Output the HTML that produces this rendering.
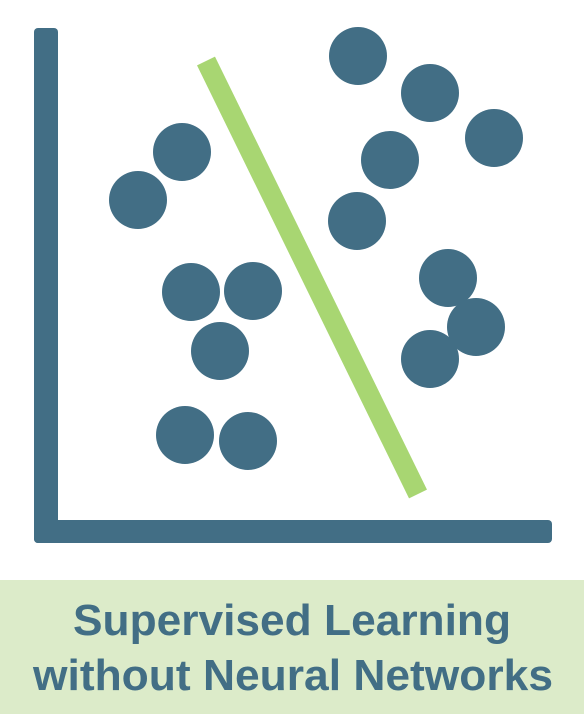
<!DOCTYPE html>
<html><head><meta charset="utf-8"><style>
html,body{margin:0;padding:0;background:#fff;}
svg{display:block}
</style></head><body>
<svg width="584" height="714" viewBox="0 0 584 714" xmlns="http://www.w3.org/2000/svg">
<rect x="0" y="0" width="584" height="714" fill="#fff"/>
<g fill="#426e85">
<rect x="34" y="28" width="24" height="515" rx="4"/>
<rect x="34" y="520" width="518" height="23" rx="4"/>
<circle cx="358" cy="56" r="29"/>
<circle cx="430" cy="93" r="29"/>
<circle cx="494" cy="138" r="29"/>
<circle cx="182" cy="152" r="29"/>
<circle cx="390" cy="160" r="29"/>
<circle cx="138" cy="200" r="29"/>
<circle cx="357" cy="221" r="29"/>
<circle cx="448" cy="278" r="29"/>
<circle cx="191" cy="292" r="29"/>
<circle cx="253" cy="291" r="29"/>
<circle cx="476" cy="327" r="29"/>
<circle cx="220" cy="351" r="29"/>
<circle cx="430" cy="359" r="29"/>
<circle cx="185" cy="435" r="29"/>
<circle cx="248" cy="441" r="29"/>
</g>
<line x1="206" y1="61" x2="418" y2="494" stroke="#a8d672" stroke-width="20"/>
<rect x="0" y="580" width="584" height="134" fill="#dcebc9"/>
<g fill="#426e85" font-family="Liberation Sans, Arial, sans-serif" font-weight="bold" font-size="44">
<text x="73" y="635" textLength="438" lengthAdjust="spacingAndGlyphs">Supervised Learning</text>
<text x="33" y="690" textLength="520" lengthAdjust="spacingAndGlyphs">without Neural Networks</text>
</g>
</svg>
</body></html>
